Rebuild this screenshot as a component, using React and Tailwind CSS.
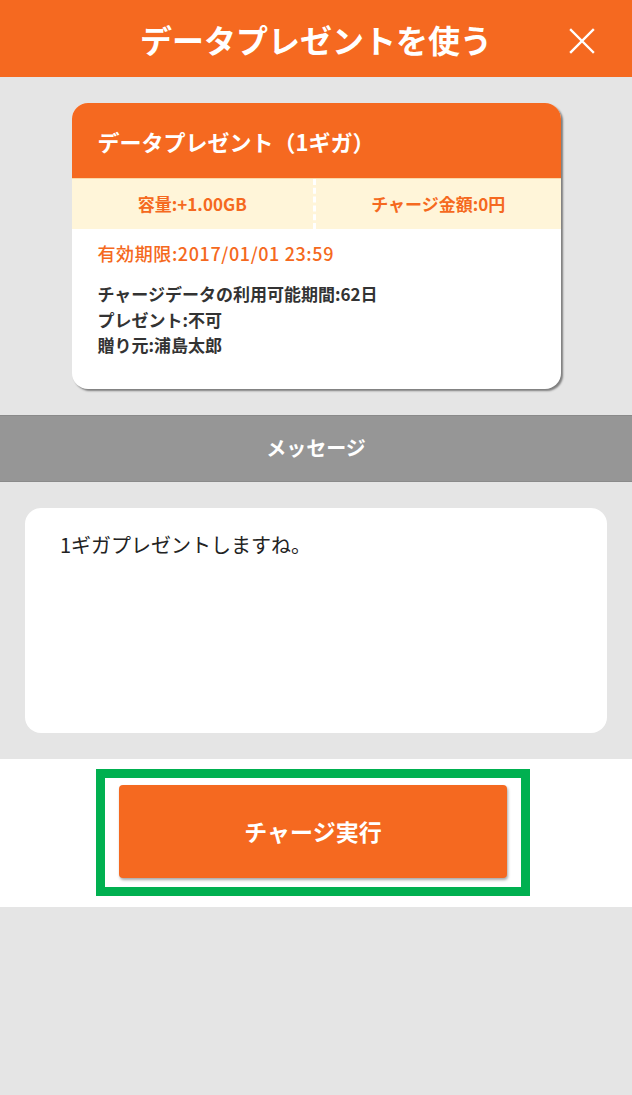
import React from "react";

const jp = { fontFamily: '"Noto Sans CJK JP", "Noto Sans", sans-serif' };

export default function App() {
  return (
    <div className="min-h-screen w-full bg-[#E5E5E5] flex flex-col" style={jp}>
      {/* Header */}
      <div className="relative h-[77px] bg-[#F56920] flex items-center justify-center">
        <h1 className="text-white text-[32px] font-bold leading-none">データプレゼントを使う</h1>
        <button className="absolute right-[37px] top-[28px] w-[26px] h-[26px]">
          <svg viewBox="0 0 26 26" className="w-full h-full" fill="none" stroke="white" strokeWidth="2.4" strokeLinecap="square">
            <path d="M2 2 L24 24 M24 2 L2 24" />
          </svg>
        </button>
      </div>

      {/* Card area */}
      <div className="pt-[26px] pb-[26px] flex justify-center">
        <div className="w-[489px] rounded-[16px] overflow-hidden bg-white shadow-[2px_2px_2px_rgba(0,0,0,0.45)]">
          <div className="h-[76px] bg-[#F56920] flex items-center px-[26px] border-b border-[#FBD9A8]">
            <span className="text-white text-[22px] font-bold leading-none">データプレゼント（1ギガ）</span>
          </div>
          <div className="h-[50px] bg-[#FFF5D9] grid grid-cols-2">
            <div className="flex items-center justify-center text-[#F56920] text-[17px] font-bold border-r-[3px] border-dashed border-white">
              容量:+1.00GB
            </div>
            <div className="flex items-center justify-center text-[#F56920] text-[17px] font-bold">
              チャージ金額:0円
            </div>
          </div>
          <div className="px-[26px] pt-[11px] pb-[31px]">
            <p className="text-[#F56920] text-[18px] font-medium tracking-[0.6px] leading-[26px]">有効期限:2017/01/01 23:59</p>
            <div className="mt-[15px] text-[#333333] text-[17px] font-bold leading-[25.5px]">
              <p>チャージデータの利用可能期間:62日</p>
              <p>プレゼント:不可</p>
              <p>贈り元:浦島太郎</p>
            </div>
          </div>
        </div>
      </div>

      {/* Message header */}
      <div className="h-[67px] bg-[#969696] border-y border-[#8A8A8A] flex items-center justify-center">
        <span className="text-white text-[20px] font-bold">メッセージ</span>
      </div>

      {/* Message box */}
      <div className="px-[25px] pt-[26px] pb-[26px]">
        <div className="h-[225px] bg-white rounded-[16px] px-[35px] pt-[23px]">
          <p className="text-[#222222] text-[20px] leading-[28px]">1ギガプレゼントしますね。</p>
        </div>
      </div>

      {/* Action area */}
      <div className="h-[148px] bg-white flex justify-start pl-[96px] pt-[10px]">
        <div className="w-[434px] h-[127px] border-[9px] border-[#00B050] pl-[14px] pr-[14px] pt-[7px]">
          <button className="w-full h-[93px] rounded-[4px] bg-[#F56920] shadow-[1px_2px_3px_rgba(0,0,0,0.35)] flex items-center justify-center">
            <span className="text-white text-[23px] font-bold">チャージ実行</span>
          </button>
        </div>
      </div>

      <div className="flex-1 bg-[#E5E5E5]" />
    </div>
  );
}
